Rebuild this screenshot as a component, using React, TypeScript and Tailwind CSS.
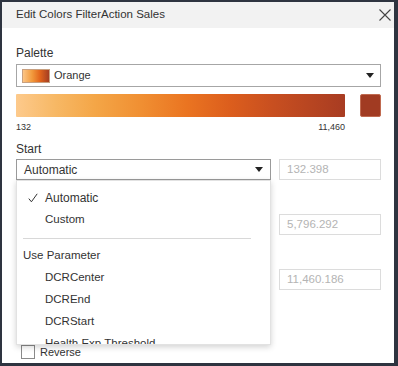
import React from 'react';

const font = { fontFamily: '"Liberation Sans", Arial, sans-serif' };

const Caret = () => (
  <svg width="8" height="5" viewBox="0 0 8 5" className="shrink-0">
    <path d="M0 0 L8 0 L4 5 Z" fill="#222" />
  </svg>
);

const Check = () => (
  <svg width="10" height="10" viewBox="0 0 10 10">
    <path d="M0.8 5.6 L3.4 8.8 L9.2 0.8" fill="none" stroke="#333" strokeWidth="1" />
  </svg>
);

const NumberBox = ({ value }: { value: string }) => (
  <div className="w-[102px] h-[21px] border border-[#dcdcdc] flex items-center pl-[7px] text-[11.5px] text-[#b4b4b4]">
    {value}
  </div>
);

const menuItems = ['DCRCenter', 'DCREnd', 'DCRStart', 'Health Exp Threshold'];

export default function App() {
  return (
    <div style={font} className="w-[398px] h-[366px] bg-[#2e3440] pt-[2px] pl-[2px] pr-[4px] pb-[3px]">
      <div className="w-full h-full bg-white flex flex-col">
        {/* Header */}
        <div className="h-[26px] bg-[#f2f2f2] flex items-center justify-between pl-[14px] pr-[3px]">
          <span className="text-[11.5px] text-[#333]">Edit Colors FilterAction Sales</span>
          <svg width="12" height="12" viewBox="0 0 12 12">
            <path d="M0.5 0.5 L11.5 11.5 M11.5 0.5 L0.5 11.5" stroke="#444" strokeWidth="1.1" />
          </svg>
        </div>

        <div className="pl-[14px] pr-[13px] flex flex-col">
          <div className="mt-[17px] h-[16px] leading-[16px] text-[12px] text-[#333]">Palette</div>

          <div className="mt-[3px] h-[23px] border border-[#a6a6a6] flex items-center pl-[5px] pr-[6px]">
            <div className="w-[28px] h-[14px] border border-[#c8a080] bg-[linear-gradient(90deg,#fcc586_0%,#f29a3c_35%,#e2651c_65%,#a43d22_100%)]" />
            <span className="ml-[4px] text-[11px] text-[#333] flex-1">Orange</span>
            <Caret />
          </div>

          <div className="mt-[7px] flex items-stretch gap-[15px]">
            <div className="flex-1 h-[23px] rounded-[1px] bg-[linear-gradient(90deg,#fdca8c_0%,#f7b865_12%,#f4a647_24%,#f08f32_38%,#ea7421_52%,#dc5e1d_65%,#c84f20_78%,#a83c22_100%)]" />
            <div className="w-[21px] h-[23px] rounded-[2px] bg-[#a13b22] border border-[#c06a50]" />
          </div>

          <div className="mt-[4px] w-[329px] flex justify-between text-[9px] leading-[12px] text-[#333]">
            <span>132</span>
            <span>11,460</span>
          </div>

          <div className="mt-[8px] h-[16px] leading-[16px] text-[12px] text-[#333]">Start</div>

          <div className="mt-[2px] flex gap-[8px]">
            <div className="w-[255px] h-[21px] border border-[#9a9a9a] flex items-center pl-[7px] pr-[7px]">
              <span className="flex-1 text-[12px] text-[#333]">Automatic</span>
              <Caret />
            </div>
            <NumberBox value="132.398" />
          </div>

          <div className="relative flex flex-col">
            <div className="mt-[34px] flex justify-end">
              <NumberBox value="5,796.292" />
            </div>
            <div className="mt-[34px] flex justify-end">
              <NumberBox value="11,460.186" />
            </div>

            <div className="mt-[54px] flex items-center gap-[5px] pl-[5px]">
              <div className="w-[14px] h-[14px] border border-[#8a8a8a] bg-white" />
              <span className="text-[11px] text-[#333]">Reverse</span>
            </div>

            {/* Dropdown menu */}
            <div className="absolute left-0 top-0 w-[255px] h-[165px] bg-white border border-[#e2e2e2] shadow-[0_2px_6px_rgba(0,0,0,0.18)] overflow-hidden text-[11.5px] text-[#333] pt-[6px]">
              <div className="h-[22px] flex items-center pl-[11px]">
                <span className="w-[17px] flex items-center"><Check /></span>
                <span className="text-[12px]">Automatic</span>
              </div>
              <div className="h-[22px] flex items-center pl-[28px]">Custom</div>
              <div className="mt-[7px] ml-[6px] w-[228px] h-px bg-[#d8d8d8]" />
              <div className="mt-[6px] h-[22px] flex items-center pl-[6px]">Use Parameter</div>
              {menuItems.map((m) => (
                <div key={m} className="h-[22px] flex items-center pl-[28px]">{m}</div>
              ))}
            </div>
          </div>
        </div>
      </div>
    </div>
  );
}
